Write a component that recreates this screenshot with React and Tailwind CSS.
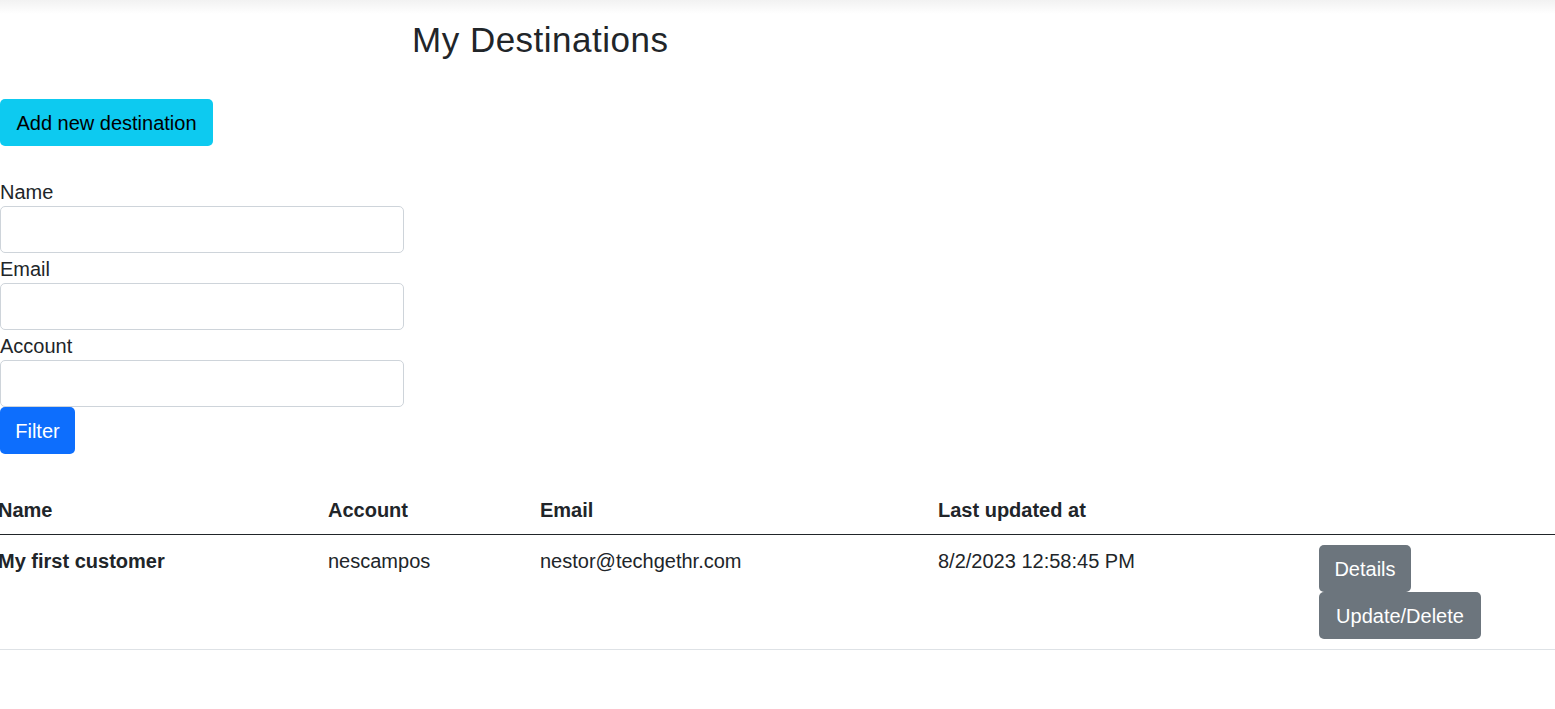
import React from 'react';

const rows = [
  {
    name: 'My first customer',
    account: 'nescampos',
    email: 'nestor@techgethr.com',
    updated: '8/2/2023 12:58:45 PM',
  },
];

const Field = ({ label }) => (
  <div>
    <label className="block text-[20px] leading-[30px] pt-[1px] h-[30px]">{label}</label>
    <input
      type="text"
      className="block w-[404px] h-[47px] border border-[#ced4da] rounded-[5px] bg-white px-[15px] outline-none"
    />
  </div>
);

const App = () => {
  return (
    <div
      className="min-h-screen bg-white text-[#212529] overflow-hidden"
      style={{ fontFamily: '"Liberation Sans", Arial, sans-serif' }}
    >
      {/* shadow from the navbar above */}
      <div className="h-[14px] bg-gradient-to-b from-[#f2f2f2] to-white"></div>

      <h3 className="ml-[412px] mt-[5px] text-[35px] leading-[42px] font-medium tracking-[0.5px]">My Destinations</h3>

      <button className="mt-[38px] h-[47px] w-[213px] rounded-[5px] bg-[#0dcaf0] text-black text-[20px] leading-[30px] pt-[1px]">
        Add new destination
      </button>

      <form className="mt-[30px]" onSubmit={(e) => e.preventDefault()}>
        <Field label="Name" />
        <Field label="Email" />
        <Field label="Account" />
        <button className="block h-[47px] w-[75px] rounded-[5px] bg-[#0d6efd] text-white text-[20px] leading-[30px] pt-[1px]">
          Filter
        </button>
      </form>

      <table className="mt-[30px] ml-[-12px] w-[1567px] table-fixed border-collapse text-[20px] leading-[30px]">
        <colgroup>
          <col className="w-[330px]" />
          <col className="w-[212px]" />
          <col className="w-[398px]" />
          <col className="w-[381px]" />
          <col />
        </colgroup>
        <thead>
          <tr className="border-b border-[#212529]">
            <th className="pt-[11px] pb-[9px] px-[10px] text-left font-bold">Name</th>
            <th className="pt-[11px] pb-[9px] px-[10px] text-left font-bold">Account</th>
            <th className="pt-[11px] pb-[9px] px-[10px] text-left font-bold">Email</th>
            <th className="pt-[11px] pb-[9px] px-[10px] text-left font-bold">Last updated at</th>
            <th className="pt-[11px] pb-[9px] px-[10px]"></th>
          </tr>
        </thead>
        <tbody>
          {rows.map((r) => (
            <tr key={r.email} className="border-b border-[#dee2e6] align-top">
              <th className="pt-[11px] px-[10px] text-left font-bold">{r.name}</th>
              <td className="pt-[11px] px-[10px]">{r.account}</td>
              <td className="pt-[11px] px-[10px]">{r.email}</td>
              <td className="pt-[11px] px-[10px]">{r.updated}</td>
              <td className="p-[10px]">
                <div className="flex flex-col items-start">
                  <button className="h-[47px] w-[92px] rounded-[5px] bg-[#6c757d] text-white pt-[1px]">Details</button>
                  <button className="h-[47px] w-[162px] rounded-[5px] bg-[#6c757d] text-white pt-[1px]">Update/Delete</button>
                </div>
              </td>
            </tr>
          ))}
        </tbody>
      </table>
    </div>
  );
};

export default App;
